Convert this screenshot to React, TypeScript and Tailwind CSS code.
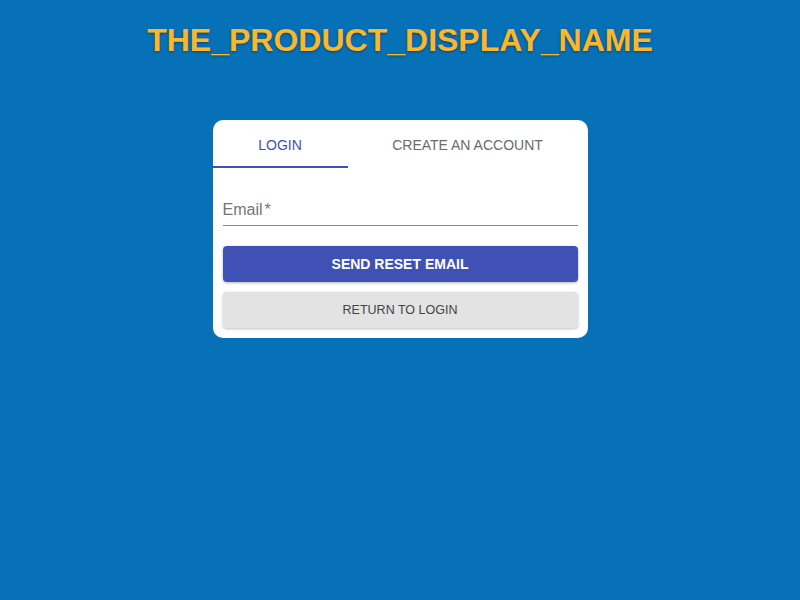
import React from 'react';

export default function App() {
    return (
        <div className="min-h-screen w-full bg-[#0771b8] flex flex-col items-center font-['Liberation_Sans',Arial,sans-serif]">
            {/* Title */}
            <h1 className="mt-[20px] h-[40px] leading-[40px] text-[32px] font-bold text-[#fbb72b] [text-shadow:0_1px_3px_rgba(0,0,0,0.4)]">
                THE_PRODUCT_DISPLAY_NAME
            </h1>

            {/* Card */}
            <div className="mt-[60px] w-[375px] bg-white rounded-[10px] pb-[10px]">
                {/* Tabs */}
                <div className="flex h-[48px]">
                    <button className="w-[135px] h-full text-[14px] text-[#3f51b5] border-b-2 border-[#3f51b5] pt-[4px]">
                        LOGIN
                    </button>
                    <button className="flex-1 h-full text-[14px] text-[#6b6b6b] border-b-2 border-transparent pt-[4px]">
                        CREATE AN ACCOUNT
                    </button>
                </div>

                <div className="px-[10px]">
                    {/* Email field */}
                    <div className="mt-[30px] h-[28px] border-b border-[#8a8a8a] flex items-end pb-[6px]">
                        <span className="text-[16px] leading-[18px] text-[#757575]">Email<span className="ml-[2px]">*</span></span>
                    </div>

                    {/* Buttons */}
                    <button className="mt-[20px] w-full h-[36px] rounded-[4px] bg-[#3f51b5] text-white text-[14px] font-bold shadow-[0_1px_3px_rgba(0,0,0,0.3)]">
                        SEND RESET EMAIL
                    </button>
                    <button className="mt-[10px] w-full h-[36px] rounded-[4px] bg-[#e3e3e3] text-[#444] text-[12.5px] shadow-[0_1px_3px_rgba(0,0,0,0.25)]">
                        RETURN TO LOGIN
                    </button>
                </div>
            </div>
        </div>
    );
}
